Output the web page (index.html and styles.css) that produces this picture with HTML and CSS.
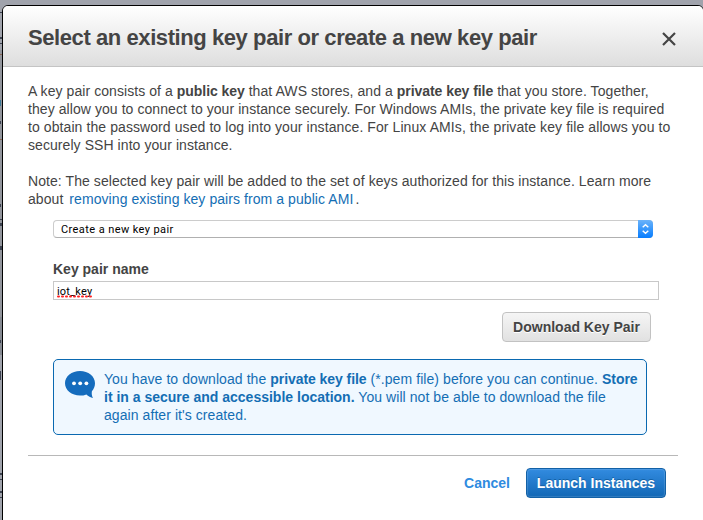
FILE: index.html
```html
<!DOCTYPE html>
<html lang="en">
<head>
<meta charset="utf-8">
<title>Select an existing key pair or create a new key pair</title>
<link rel="stylesheet" href="styles.css">
</head>
<body>
<svg class="page-edge" width="2" height="520" viewBox="0 0 2 520" aria-hidden="true">
<path fill="#92959c" d="M0 50h2v280H0z"/>
<path fill="#858991" d="M0 317h2v38H0z"/>
<path fill="#3c4250" d="M0 12h2v1H0zM0 37h2v2H0zM0 43h2v1H0zM0 121h1v3H0zM0 204h1v3H0zM0 219h2v1H0zM0 223h2v3H0zM0 246h2v4H0zM0 340h1v3H0zM0 371h1v9H0zM0 473h2v2H0zM0 479h2v1H0zM0 491h2v2H0zM0 497h2v1H0z"/>
<path fill="#886555" d="M0 54h2v1H0zM0 139h2v1H0z"/>
<path fill="#3b7896" d="M0 100h1v6H0z"/>
</svg>
<main class="dialog">
  <header class="dialog-header">
    <h1>Select an existing key pair or create a new key pair</h1>
    <svg class="close" width="14" height="14" viewBox="0 0 14 14"><path d="M1 1l12 12M13 1L1 13" stroke="#444" stroke-width="2.2" fill="none"/></svg>
  </header>
  <section class="dialog-body">
    <p class="intro">
      <span class="line">A key pair consists of a <b>public key</b> that AWS stores, and a <b>private key file</b> that you store. Together,</span>
      <span class="line">they allow you to connect to your instance securely. For Windows AMIs, the private key file is required</span>
      <span class="line wide">to obtain the password used to log into your instance. For Linux AMIs, the private key file allows you to</span>
      <span class="line">securely SSH into your instance.</span>
    </p>
    <p class="note">
      <span class="line">Note: The selected key pair will be added to the set of keys authorized for this instance. Learn more</span>
      <span class="line">about <a class="link">removing existing key pairs from a public AMI</a>.</span>
    </p>
    <div class="form">
      <div class="select"><span class="select-text">Create a new key pair</span>
        <span class="select-cap"><svg width="15" height="18" viewBox="0 0 15 18"><path d="M4.700 7.300L7.500 4.700l2.800 2.600M4.700 10.700l2.800 2.600 2.800-2.600" fill="none" stroke="#fff" stroke-width="1.400"/></svg></span>
      </div>
      <label class="field-label">Key pair name</label>
      <div class="field"><span class="field-text">iot_key</span><svg class="spell" width="36" height="3" viewBox="0 0 36 3"><path d="M1 1.500h35" stroke="#f22" stroke-width="2" stroke-linecap="round" stroke-dasharray="1 3" fill="none"/></svg></div>
      <div class="download-row"><span class="button download">Download Key Pair</span></div>
      <div class="notice">
        <svg class="bubble" width="30" height="28" viewBox="0 0 30 28"><path fill="#156cbd" d="M15 0C6.700 0 0 5.400 0 12.300s6.700 12.300 15 12.300c2.300 0 4.500-.4 6.400-1.200 1.900 1.700 4.200 3 6.600 3.500-1.200-2-1.500-4.400-1.100-6.700 2-2.200 3.100-5 3.100-7.900C30 5.400 23.300 0 15 0z"/><g fill="#fff"><circle cx="9" cy="12.300" r="1.900"/><circle cx="15.200" cy="12.300" r="1.900"/><circle cx="21.400" cy="12.300" r="1.900"/></g></svg>
        <p>
          <span class="line">You have to download the <b>private key file</b> (*.pem file) before you can continue. <b>Store</b></span>
          <span class="line"><b class="even">it in a secure and accessible location.</b> You will not be able to download the file</span>
          <span class="line">again after it's created.</span>
        </p>
      </div>
    </div>
    <footer class="dialog-footer">
      <a class="cancel">Cancel</a>
      <span class="button launch">Launch Instances</span>
    </footer>
  </section>
</main>
</body>
</html>
```
FILE: styles.css
```css
* { box-sizing: border-box; }
body {
  margin: 0;
  height: 520px;
  padding: 5px 0 0 2px;
  overflow: hidden;
  background: #a0a3ac;
  color: #444;
  font: 14px/18px "Liberation Sans", Arial, sans-serif;
}
p, h1 { margin: 0; }
.page-edge { position: absolute; left: 0; top: 0; }
.dialog {
  width: 702px;
  height: 530px;
  border: 1px solid #000;
  border-radius: 6px;
  background: #fff;
  overflow: hidden;
}
.dialog-header {
  display: flex;
  align-items: center;
  justify-content: space-between;
  height: 61px;
  padding: 4px 27px 0 25px;
  border-bottom: 1px solid #c4c4c4;
  background: linear-gradient(#fff, #dedede);
}
h1 { font-size: 22px; line-height: 28px; white-space: nowrap; letter-spacing: -0.42px; }
.close { margin-top: 1px; }
.dialog-body { padding: 15px 25px 0; }
.line { display: block; width: max-content; white-space: nowrap; letter-spacing: 0.07px; }
.line b { letter-spacing: -0.06px; }
.line .even { letter-spacing: 0; }
.wide { letter-spacing: 0.085px; }
.note { margin-top: 18px; }
.link { color: #146eb4; margin: 0 2px; }
.form { padding: 12px 0 0 25px; }
.select {
  display: flex;
  justify-content: space-between;
  width: 600px;
  height: 18px;
  border: 1px solid #ccc;
  border-bottom-color: #b0b0b0;
  border-radius: 4px;
  color: #000;
  font: 11px/18px Roboto, sans-serif;
}
.select-text { padding-left: 7px; letter-spacing: 0.41px; }
.select-cap {
  width: 15px;
  height: 18px;
  margin: -1px;
  border-radius: 0 4px 4px 0;
  background: linear-gradient(#6bb3fa, #067dff);
}
.select-cap svg, .notice svg { display: block; }
.field-label { display: block; margin: 22px 0 3px; font-weight: bold; }
.field {
  position: relative;
  width: 606px;
  height: 19px;
  padding-left: 3px;
  border: 1px solid #c8c8c8;
  color: #000;
  font: 11px/19px Roboto, sans-serif;
}
.field-text { letter-spacing: 0.2px; }
.spell { position: absolute; left: 3px; top: 13px; }
.download-row { width: 598px; margin-top: 12px; display: flex; justify-content: flex-end; }
.button {
  display: flex;
  justify-content: center;
  align-items: center;
  height: 30px;
  border: 1px solid #c2c2c2;
  border-radius: 4px;
  font-weight: bold;
  white-space: nowrap;
}
.download {
  width: 149px;
  background: linear-gradient(#f5f5f5, #e1e1e1);
  text-shadow: 0 1px 0 #fff;
}
.notice {
  display: flex;
  width: 594px;
  height: 76px;
  margin-top: 17px;
  padding: 11px 0 0 11px;
  gap: 9px;
  border: 1px solid #0a69b1;
  border-radius: 5px;
  background: #f0f8ff;
  color: #146eb4;
}
.notice p { margin-top: -1px; }
.dialog-footer {
  display: flex;
  justify-content: flex-end;
  align-items: center;
  gap: 16px;
  width: 650px;
  margin-top: 20px;
  padding: 12px 12px 0 0;
  border-top: 1px solid #b8b8b8;
}
.cancel { color: #2e8be0; font-weight: bold; }
.launch {
  width: 140px;
  color: #fff;
  border-color: #1361a6;
  background: linear-gradient(#328be0, #1268b6);
  text-shadow: 0 -1px 0 #1361a6;
  box-shadow: inset 0 0 1px 1px rgba(255, 255, 255, 0.14);
}
```
